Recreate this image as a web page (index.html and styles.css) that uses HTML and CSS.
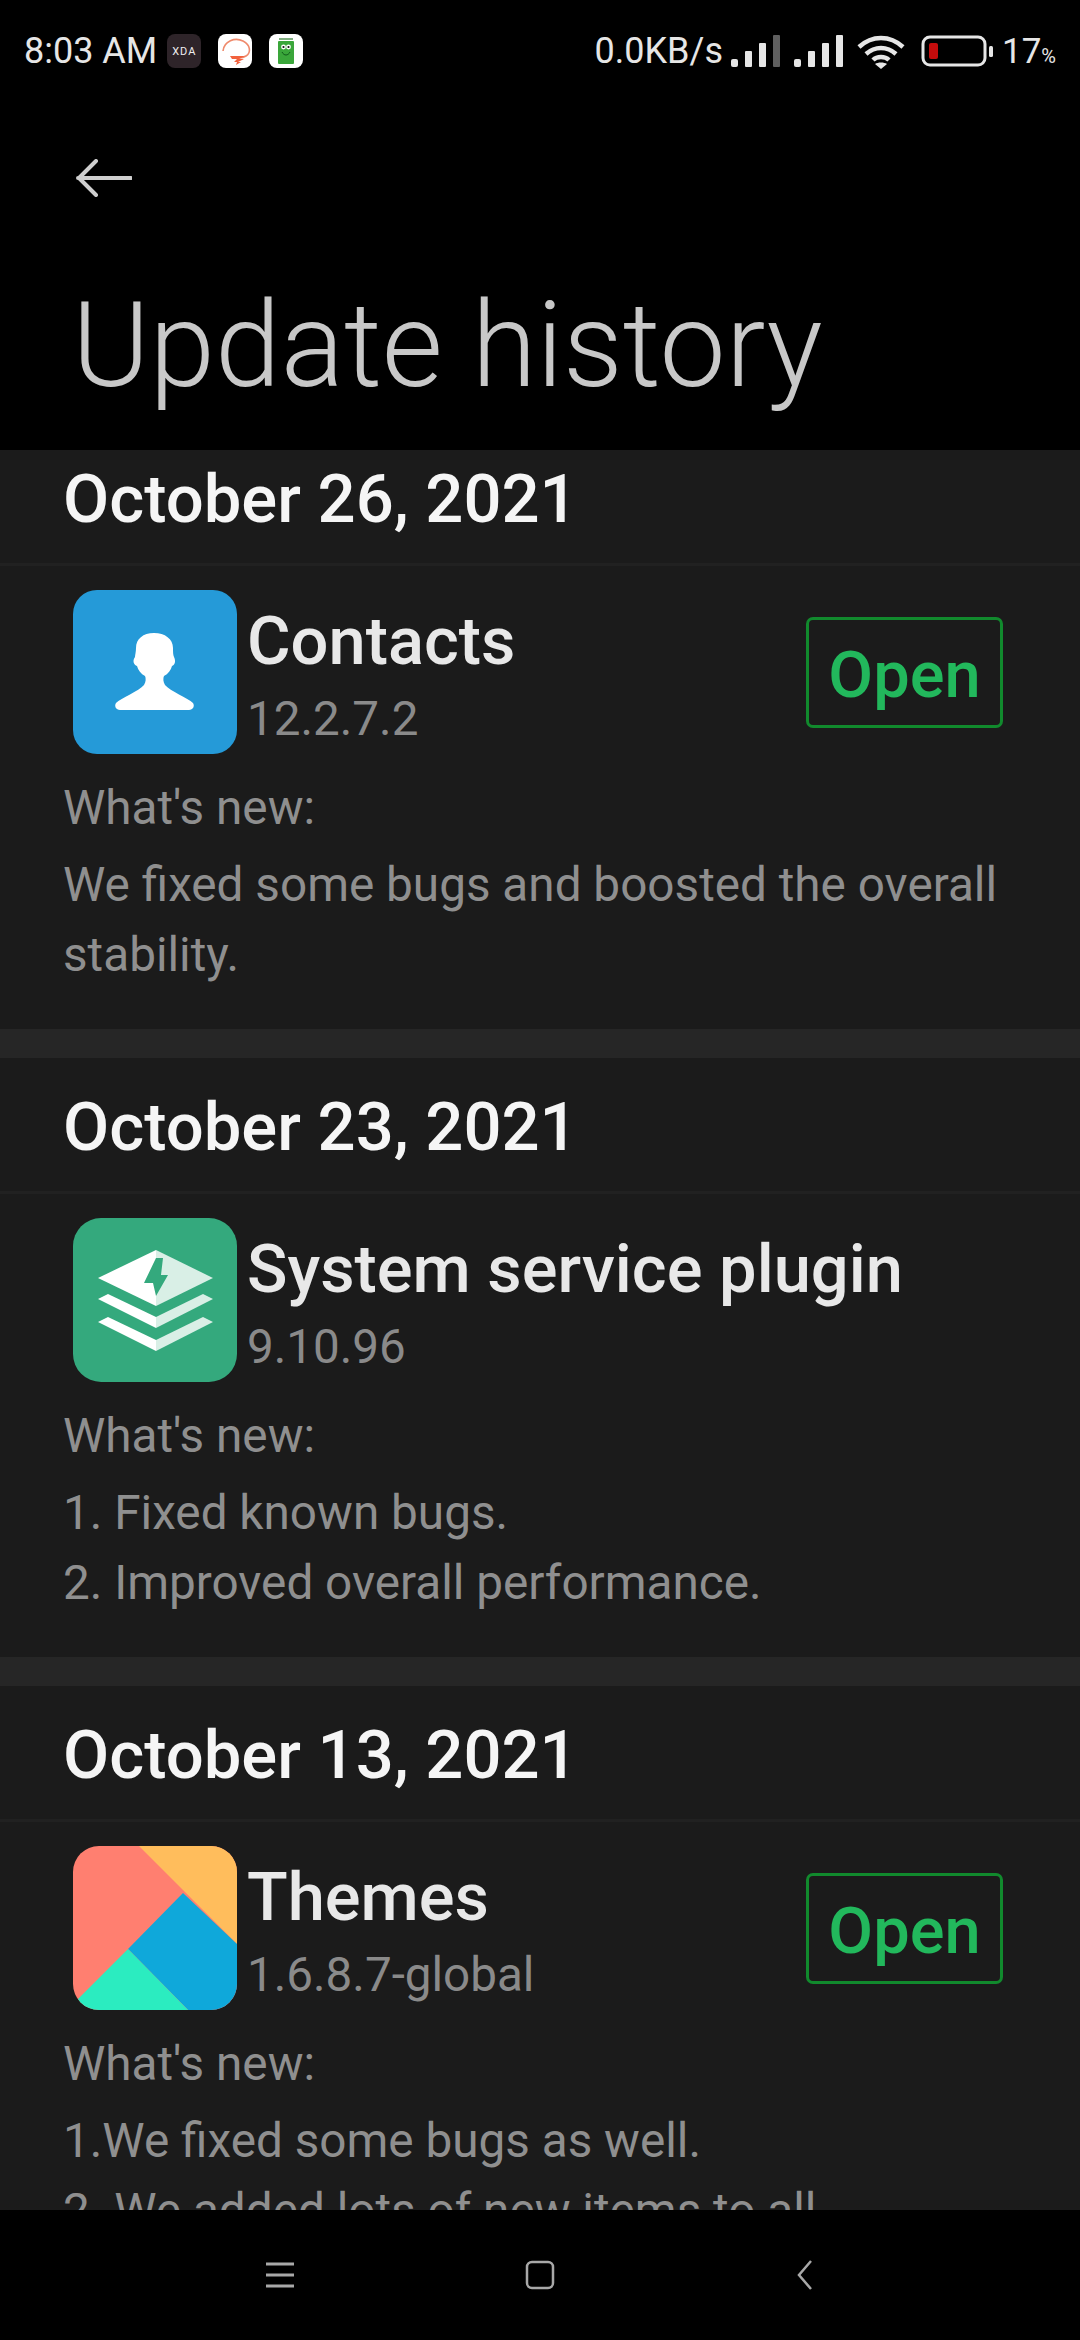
FILE: index.html
```html
<!DOCTYPE html>
<html lang="en">
<head>
    <meta charset="UTF-8">
    <meta name="viewport" content="width=device-width, initial-scale=1.0">
    <title>Update history</title>
    <link rel="stylesheet" href="styles.css">
</head>
<body>

<div class="phone">
    <header class="top">
        <div class="status">
            <span class="time">8:03 AM</span>
            <span class="notif notif-xda">XDA</span>
            <span class="notif notif-white">
                <svg viewBox="0 0 34 34" width="34" height="34">
                    <path d="M5 17C6 7 17 3 25 7c8 4 8 12 3 15-3 2-9 2-13 1" fill="none" stroke="#ef8a6c" stroke-width="1.6"/>
                    <path d="M12 22h15l-6 3h5l-6 3h3l-5 3 1-3h-3l3-3h-5z" fill="#f2623e"/>
                </svg>
            </span>
            <span class="notif notif-white">
                <svg viewBox="0 0 34 34" width="34" height="34">
                    <rect x="10" y="4" width="14" height="2" fill="#7fae7f"/>
                    <rect x="9" y="7" width="16" height="23" rx="1" fill="#3aa63a"/>
                    <circle cx="14.5" cy="13" r="2.4" fill="#fff"/>
                    <circle cx="19.5" cy="13" r="2.4" fill="#fff"/>
                    <circle cx="14.5" cy="13" r="1.1" fill="#111"/>
                    <circle cx="19.5" cy="13" r="1.1" fill="#111"/>
                    <path d="M13 18c2 4 6 4 8 0" fill="none" stroke="#0f5a1a" stroke-width="1"/>
                </svg>
            </span>
            <span class="status-right">
                <span class="speed">0.0KB/s</span>
                <svg class="bars" viewBox="0 0 49 32" width="49" height="32">
                    <rect x="0" y="24" width="7" height="8" rx="2" fill="#e6e6e6"/>
                    <rect x="14" y="16" width="7" height="16" rx="1" fill="#e6e6e6"/>
                    <rect x="28" y="8" width="7" height="24" rx="1" fill="#e6e6e6"/>
                    <rect x="42" y="0" width="7" height="32" rx="1" fill="#5f5f5f"/>
                </svg>
                <svg class="bars" viewBox="0 0 49 32" width="49" height="32">
                    <rect x="0" y="24" width="7" height="8" rx="2" fill="#e6e6e6"/>
                    <rect x="14" y="16" width="7" height="16" rx="1" fill="#e6e6e6"/>
                    <rect x="28" y="8" width="7" height="24" rx="1" fill="#e6e6e6"/>
                    <rect x="42" y="0" width="7" height="32" rx="1" fill="#e6e6e6"/>
                </svg>
                <svg class="wifi" viewBox="0 0 48 35" width="48" height="35">
                    <path d="M2 13C15 1 33 1 46 13" fill="none" stroke="#e6e6e6" stroke-width="4.5"/>
                    <path d="M9 20C18 12 30 12 39 20" fill="none" stroke="#e6e6e6" stroke-width="4.5"/>
                    <path d="M16 26C20 22 28 22 32 26" fill="none" stroke="#e6e6e6" stroke-width="4.5"/>
                    <path d="M24 35l-6-5c3-2 9-2 12 0z" fill="#e6e6e6"/>
                </svg>
                <svg class="battery" viewBox="0 0 72 32" width="72" height="32">
                    <rect x="2" y="2" width="62" height="28" rx="7" fill="none" stroke="#e6e6e6" stroke-width="3"/>
                    <rect x="8" y="8" width="9" height="16" rx="2" fill="#c40c0c"/>
                    <rect x="68" y="11" width="4" height="11" rx="1.5" fill="#e6e6e6"/>
                </svg>
                <span class="level">17<small>%</small></span>
            </span>
        </div>
        <div class="back">
            <svg viewBox="0 0 56 38" width="56" height="38">
                <path d="M2 19H55M20 2L3 19l17 17" fill="none" stroke="#cfcfcf" stroke-width="4" stroke-linecap="round" stroke-linejoin="round"/>
            </svg>
        </div>
        <h1>Update history</h1>
    </header>

    <main class="list">
        <section class="entry entry-first">
            <h2>October 26, 2021</h2>
            <div class="app">
                <span class="icon">
                    <svg viewBox="0 0 164 164" width="164" height="164">
                        <rect width="164" height="164" rx="24" fill="#259ad8"/>
                        <path d="M47 120C43 120 41 116 43 113C48 108 66 101 71 95C73 92 73 88 72 86C68 84 65 80 64 76C61 75 59 71 62 67C62 65 63 62 63 58C63 49 70 43 81 43C92 43 100 49 100 58C100 62 100 65 101 67C103 71 102 75 99 76C98 80 95 84 91 86C90 88 90 92 92 95C97 101 115 108 120 113C122 116 120 120 116 120Z" fill="#fff"/>
                    </svg>
                </span>
                <div class="app-text">
                    <div class="app-name">Contacts</div>
                    <div class="app-version">12.2.7.2</div>
                </div>
                <a class="open">Open</a>
            </div>
            <div class="notes">
                <p class="whatsnew">What's new:</p>
                <p>We fixed some bugs and boosted the overall stability.</p>
            </div>
        </section>

        <section class="entry">
            <h2>October 23, 2021</h2>
            <div class="app">
                <span class="icon">
                    <svg viewBox="0 0 164 164" width="164" height="164">
                        <rect width="164" height="164" rx="28" fill="#34a97d"/>
                        <path d="M25 60L83 32v56z" fill="#fff"/>
                        <path d="M83 32l57 28-57 28z" fill="#d9efe6"/>
                        <path d="M25 81l10-5 48 23v11z" fill="#fff"/>
                        <path d="M140 81l-10-5-47 23v11z" fill="#d9efe6"/>
                        <path d="M25 104l10-5 48 23v11z" fill="#fff"/>
                        <path d="M140 104l-10-5-47 23v11z" fill="#d9efe6"/>
                        <path d="M83 40L71 65h9l3 13 12-21h-7l2-17z" fill="#34a97d"/>
                    </svg>
                </span>
                <div class="app-text">
                    <div class="app-name">System service plugin</div>
                    <div class="app-version">9.10.96</div>
                </div>
            </div>
            <div class="notes">
                <p class="whatsnew">What's new:</p>
                <p>1. Fixed known bugs.</p>
                <p>2. Improved overall performance.</p>
            </div>
        </section>

        <section class="entry">
            <h2>October 13, 2021</h2>
            <div class="app">
                <span class="icon">
                    <svg viewBox="0 0 164 164" width="164" height="164">
                        <clipPath id="themeClip"><rect width="164" height="164" rx="26"/></clipPath>
                        <g clip-path="url(#themeClip)">
                            <rect width="164" height="164" fill="#ff7f70"/>
                            <path d="M66 0H164V98z" fill="#ffbd5c"/>
                            <path d="M110 47L164 98V164H115L55 103z" fill="#0fa8da"/>
                            <path d="M55 103L115 164H0V158z" fill="#2becc0"/>
                        </g>
                    </svg>
                </span>
                <div class="app-text">
                    <div class="app-name">Themes</div>
                    <div class="app-version">1.6.8.7-global</div>
                </div>
                <a class="open">Open</a>
            </div>
            <div class="notes">
                <p class="whatsnew">What's new:</p>
                <p>1.We fixed some bugs as well.</p>
                <p>2. We added lots of new items to all</p>
            </div>
        </section>
    </main>

    <nav class="navbar">
        <svg viewBox="0 0 30 26" width="30" height="26">
            <path d="M1 2H29M1 13H29M1 24H29" stroke="#a8a8a8" stroke-width="3"/>
        </svg>
        <svg viewBox="0 0 30 30" width="30" height="30">
            <rect x="2" y="2" width="26" height="26" rx="5" fill="none" stroke="#a8a8a8" stroke-width="2.5"/>
        </svg>
        <svg class="nav-back" viewBox="0 0 30 30" width="30" height="30">
            <path d="M20 1L8 15l12 14" fill="none" stroke="#a8a8a8" stroke-width="2.5"/>
        </svg>
    </nav>
</div>

</body>
</html>
```

FILE: styles.css
```css
body {
    margin: 0;
    background-color: #000;
    font-family: 'Roboto', sans-serif;
}

.phone {
    width: 1080px;
    height: 2340px;
    display: flex;
    flex-direction: column;
    overflow: hidden;
}

.top {
    height: 450px;
    flex-shrink: 0;
    background-color: #000;
}

.status {
    height: 102px;
    display: flex;
    align-items: center;
    padding: 0 24px;
    color: #e6e6e6;
    font-size: 36px;
}

.notif {
    width: 34px;
    height: 34px;
    border-radius: 8px;
    display: flex;
    align-items: center;
    justify-content: center;
    margin-left: 17px;
}

.time + .notif {
    margin-left: 10px;
}

.notif-xda {
    background-color: #2e2429;
    color: #eee;
    font-size: 11px;
    letter-spacing: 1px;
}

.notif-white {
    background-color: #fff;
}

.status-right {
    margin-left: auto;
    display: flex;
    align-items: center;
}

.bars {
    margin-left: 14px;
}

.speed + .bars {
    margin-left: 8px;
}

.wifi {
    margin-left: 14px;
}

.battery {
    margin: 0 9px 0 16px;
}

.level {
    font-size: 35px;
}

.level small {
    font-size: 20px;
}

.back {
    height: 38px;
    margin: 57px 0 0 76px;
    display: flex;
}

h1 {
    margin: 83px 0 0 72px;
    font-size: 118px;
    font-weight: 300;
    line-height: 132px;
    color: #c8c8c8;
}

.list {
    flex: 1;
    min-height: 0;
    overflow: hidden;
    background-color: #262626;
}

.entry {
    background-color: #1b1b1b;
    margin-bottom: 29px;
}

.entry h2 {
    margin: 0;
    height: 136px;
    box-sizing: border-box;
    padding: 34px 63px 0;
    font-size: 67px;
    line-height: 70px;
    font-weight: 500;
    color: #f5f5f5;
    border-bottom: 3px solid #212121;
}

.entry-first h2 {
    height: 116px;
    padding-top: 14px;
}

.app {
    display: flex;
    align-items: center;
    height: 164px;
    padding: 24px 77px 0 73px;
}

.icon {
    width: 164px;
    height: 164px;
    flex-shrink: 0;
}

.app-text {
    flex: 1;
    margin-left: 10px;
    padding-top: 6px;
}

.app-name {
    font-size: 66.8px;
    font-weight: 500;
    line-height: 76px;
    color: #e8e8e8;
}

.app-version {
    margin-top: 12px;
    font-size: 47.6px;
    line-height: 56px;
    color: #8a8a8a;
}

.open {
    width: 197px;
    height: 111px;
    box-sizing: border-box;
    padding-top: 5px;
    border: 3px solid #118a2d;
    border-radius: 7px;
    display: flex;
    align-items: center;
    justify-content: center;
    font-size: 65px;
    font-weight: 500;
    color: #22b85c;
}

.notes {
    padding: 19px 63px 39px;
    font-size: 47.7px;
    line-height: 70px;
    color: #8f8f8f;
}

.notes p {
    margin: 0;
}

.notes .whatsnew {
    margin-bottom: 7px;
}

.navbar {
    height: 130px;
    flex-shrink: 0;
    background-color: #000;
    display: flex;
    align-items: center;
    justify-content: center;
    gap: 230px;
}

.nav-back {
    margin-left: 6px;
    margin-right: -6px;
}
```
